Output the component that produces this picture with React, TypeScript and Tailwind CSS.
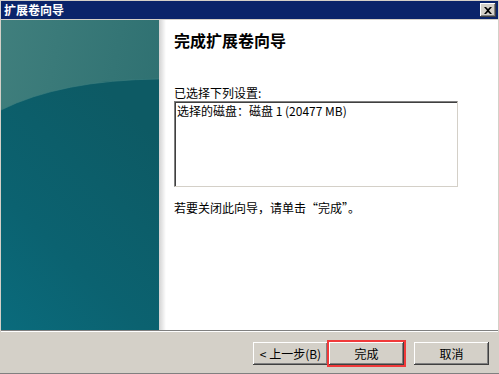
import React from "react";

const font = { fontFamily: '"Noto Sans CJK SC", "Liberation Sans", sans-serif' };

function Btn({ children, red }: { children: React.ReactNode; red?: boolean }) {
  return (
    <div
      className={`w-[75px] h-[23px] bg-[#d4d0c8] flex items-center justify-center text-[12px] text-black leading-none shadow-[inset_-1px_-1px_0_#404040,inset_1px_1px_0_#ffffff,inset_-2px_-2px_0_#808080,inset_2px_2px_0_#d4d0c8] ${red ? "outline-2 outline-[#f03a3a]" : ""}`}
    >
      {children}
    </div>
  );
}

function Panel() {
  return (
    <svg width="158" height="310" viewBox="0 0 158 310" className="block shrink-0">
      <defs>
        <linearGradient id="top" x1="0" y1="0" x2="1" y2="0.4">
          <stop offset="0" stopColor="#407f7d" />
          <stop offset="1" stopColor="#2e7071" />
        </linearGradient>
        <linearGradient id="bot" x1="0.6" y1="0" x2="0" y2="1">
          <stop offset="0" stopColor="#0d5a64" />
          <stop offset="0.6" stopColor="#0b6270" />
          <stop offset="1" stopColor="#0a6b7c" />
        </linearGradient>
      </defs>
      <rect x="0" y="0" width="158" height="310" fill="url(#top)" />
      <path d="M0,90 Q60,60 158,59 L158,310 L0,310 Z" fill="url(#bot)" />
      <path d="M0,90 Q60,60 158,59" fill="none" stroke="#3f8080" strokeWidth="1" opacity="0.6" />
    </svg>
  );
}

export default function App() {
  return (
    <div className="w-[499px] h-[374px] bg-[#d4d0c8] flex flex-col p-px border-b border-[#808080]" style={font}>
      <div className="h-[18px] bg-[#0a246a] flex items-center justify-between pl-[3px] pr-[2px] shrink-0">
        <span className="text-white font-bold text-[12px] leading-none">扩展卷向导</span>
        <div className="w-[16px] h-[14px] bg-[#d4d0c8] flex items-center justify-center shadow-[inset_-1px_-1px_0_#404040,inset_1px_1px_0_#ffffff,inset_-2px_-2px_0_#808080]">
          <svg width="8" height="7" viewBox="0 0 8 7">
            <path d="M0,0 L2,0 L4,2 L6,0 L8,0 L5,3.5 L8,7 L6,7 L4,5 L2,7 L0,7 L3,3.5 Z" fill="#000" />
          </svg>
        </div>
      </div>
      <div className="h-px shrink-0" />
      <div className="flex h-[310px] shrink-0 bg-white">
        <Panel />
        <div className="w-[7px] shrink-0 bg-gradient-to-r from-[#d2d2d2] to-white" />
        <div className="flex-1 flex flex-col pl-[8px] text-black">
          <div className="mt-[10px] text-[16px] font-bold leading-[20px]">完成扩展卷向导</div>
          <div className="mt-[36px] text-[12px] leading-[14px]">已选择下列设置:</div>
          <div className="mt-[1px] w-[284px] h-[86px] bg-white border border-t-[#808080] border-l-[#808080] border-r-[#d4d0c8] border-b-[#d4d0c8] shadow-[inset_1px_1px_0_#404040] pl-[2px] pt-[2px] text-[12px] leading-[14px]">
            选择的磁盘：磁盘 1 (20477 MB)
          </div>
          <div className="mt-[14px] text-[12px] leading-[14px]">若要关闭此向导，请单击“完成”。</div>
        </div>
      </div>
      <div className="h-px bg-[#808080] shrink-0" />
      <div className="h-px bg-white shrink-0" />
      <div className="flex-1 flex items-start justify-end pr-[9px] pt-[10px]">
        <Btn>&lt; 上一步(B)</Btn>
        <div className="ml-px"><Btn red>完成</Btn></div>
        <div className="ml-[10px]"><Btn>取消</Btn></div>
      </div>
    </div>
  );
}
